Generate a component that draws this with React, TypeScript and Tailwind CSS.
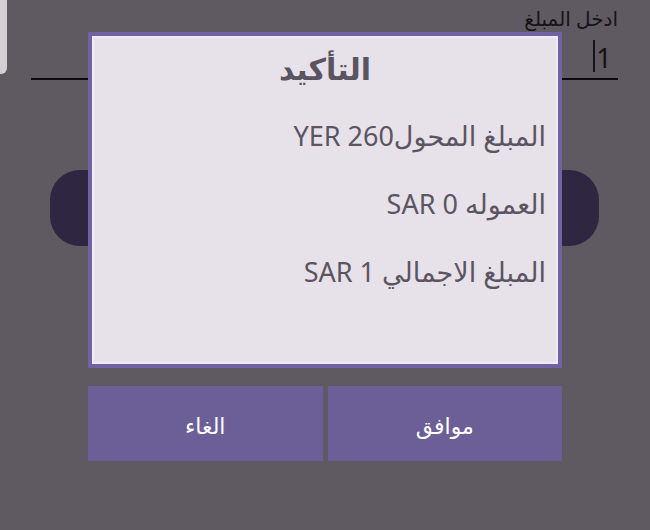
import React from 'react'

const font = { fontFamily: '"Noto Sans", "DejaVu Sans", sans-serif' }

function Line({ text }: { text: string }) {
  return (
    <p className="text-[27px] leading-[34px] text-[#5b5561]" dir="rtl">
      {text}
    </p>
  )
}

export default function App() {
  return (
    <div
      className="relative w-[650px] h-[530px] overflow-hidden bg-[#5f5961]"
      style={font}
    >
      {/* dimmed page underneath */}
      <div className="absolute left-0 top-0 w-[7px] h-[74px] bg-[#d3d0d4] rounded-br-[6px]" />

      <div className="flex flex-col pt-[6px] pl-[31px] pr-[32px]">
        <label
          dir="rtl"
          className="text-[20px] leading-[26px] text-[#161318]"
        >
          ادخل المبلغ
        </label>
        <div className="h-[48px] border-b-[2px] border-[#0b0a0c] flex justify-end items-end pb-[6px] pr-[6px]">
          <span className="flex items-end text-[28px] leading-[30px] text-[#161318]">
            <span className="w-[2px] h-[32px] bg-[#161318] mr-[1px]" />
            1
          </span>
        </div>
        <div className="mt-[90px] mx-[19px] h-[76px] rounded-[30px] bg-[#2f2641]" />
      </div>

      {/* confirm dialog */}
      <div className="absolute left-[88px] top-[32px] w-[474px] flex flex-col gap-[18px]">
        <div className="h-[336px] border-[4px] border-[#6f63a1] bg-[#f1ebf7] p-[2px]">
          <div className="h-full bg-[#e7e1ea] flex flex-col">
            <h2
              dir="rtl"
              className="text-center pt-[11px] text-[30px] leading-[40px] font-bold text-[#5a5460]"
            >
              التأكيد
            </h2>
            <div className="flex flex-col gap-[34px] mt-[30px] pr-[10px]">
              <Line text="المبلغ المحول260 YER" />
              <Line text="العموله 0 SAR" />
              <Line text="المبلغ الاجمالي 1 SAR" />
            </div>
          </div>
        </div>
        <div className="flex gap-[5px] h-[75px]">
          <button className="flex-1 bg-[#6c5f98] text-white text-[22px] flex items-center justify-center pt-[4px]">
            الغاء
          </button>
          <button className="flex-1 bg-[#6c5f98] text-white text-[22px] flex items-center justify-center pt-[4px]">
            موافق
          </button>
        </div>
      </div>
    </div>
  )
}
